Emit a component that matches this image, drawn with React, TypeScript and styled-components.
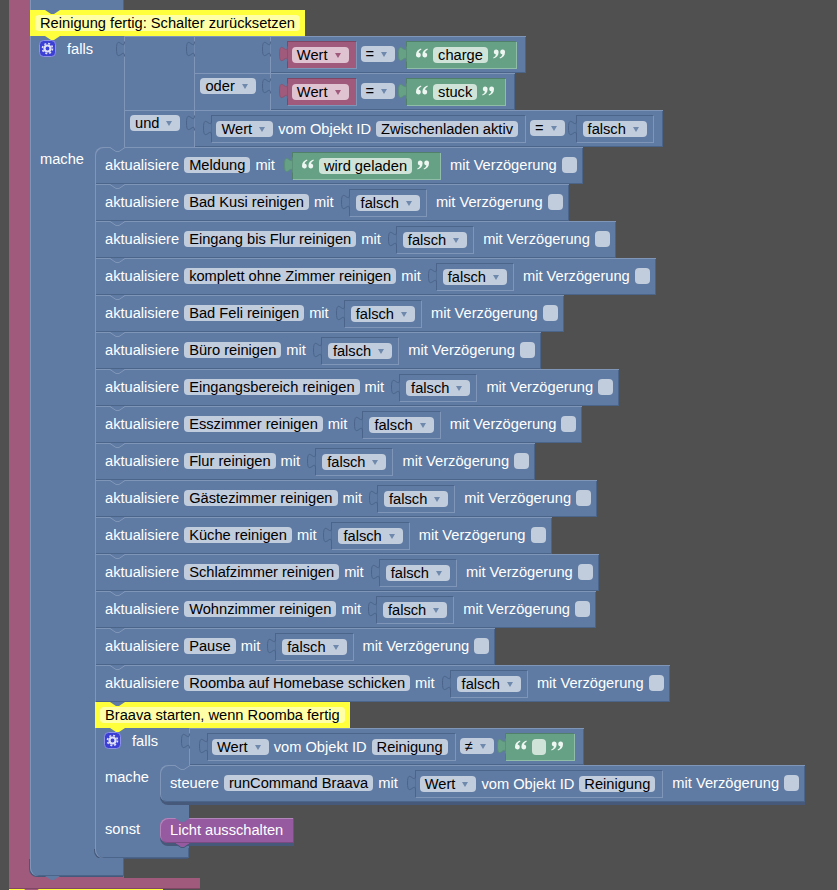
import React from 'react';
import styled, { createGlobalStyle } from 'styled-components';

const BLUE = '#5f7ba3';
const BLUE_LIGHT = '#8096b8';
const BLUE_DARK = '#4b6489';
const BLUE_SHADOW = '#46597a';
const PINK = '#a05a7c';
const PINK_DARK = '#7f4763';
const GREEN = '#66a085';
const GREEN_DARK = '#50806a';
const YELLOW = '#ffff3c';
const VIOLET = '#955a9f';

type Tone = 'blue' | 'pink' | 'green';

const fieldColors: Record<Tone, string> = {
  blue: '#c1ccdc',
  pink: '#e0c3d0',
  green: '#cfe3d9',
};

const arrowColors: Record<Tone, string> = {
  blue: '#6f89ad',
  pink: '#a05a7c',
  green: '#66a085',
};

const GlobalStyle = createGlobalStyle`
  html, body {
    margin: 0;
    background: #505050;
  }
`;

const Page = styled.div`
  box-sizing: border-box;
  height: 890px;
  width: 837px;
  padding-left: 9px;
  overflow: hidden;
  background: #505050;
  font-family: 'Liberation Sans', Arial, sans-serif;
  font-size: 14.67px;
  line-height: 16px;
  color: #fff;
`;

const LoopBlock = styled.div`
  position: relative;
`;

const LoopBody = styled.div`
  display: flex;
  align-items: stretch;
`;

const LoopRail = styled.div`
  width: 21px;
  flex: none;
  background: ${PINK};
`;

const LoopContent = styled.div`
  display: flex;
  flex-direction: column;
  align-items: flex-start;
`;

const LoopFoot = styled.div`
  position: relative;
  width: 191px;
  height: 11px;
  background: ${PINK};
  box-shadow: inset 0 -1px 0 ${PINK_DARK};
`;

const NextComment = styled.div`
  position: relative;
  width: 154px;
  height: 26px;
  background: ${YELLOW};
`;

const Stub = styled.div`
  width: 94px;
  height: 10px;
  background: ${BLUE};
  box-shadow: inset 1px 0 0 ${BLUE_LIGHT}, inset -1px 0 0 ${BLUE_DARK};
`;

const NotchSvg = styled.svg<{ $left: number; $below?: boolean }>`
  position: absolute;
  left: ${(p) => p.$left}px;
  top: ${(p) => (p.$below ? '100%' : '0')};
  width: 15px;
  height: 5px;
  overflow: visible;
  z-index: 3;
`;

// the little trapezoid that joins two stacked blocks
const Notch = ({
  fill,
  line = 'none',
  left = 15,
  below,
}: {
  fill: string;
  line?: string;
  left?: number;
  below?: boolean;
}) => (
  <NotchSvg $left={left} $below={below} viewBox="0 0 15 5">
    <path d="M0 0 L6 4 H9 L15 0 Z" fill={fill} />
    <path d="M0 0.5 L6 4.5 H9 L15 0.5" fill="none" stroke={line} />
  </NotchSvg>
);

const PuzzleSvg = styled.svg`
  position: absolute;
  left: -8px;
  top: 5px;
  width: 9px;
  height: 16px;
  overflow: visible;
  z-index: 2;
`;

// value connector on the left side of an input block
const Puzzle = ({ fill, line = BLUE_DARK }: { fill: string; line?: string }) => (
  <PuzzleSvg viewBox="0 0 9 16">
    <path d="M8.5 0.5 c0,10 -8,-8 -8,7.5 s8,-2.5 8,7.5 Z" fill={fill} stroke="none" />
    <path d="M8.5 0.5 c0,10 -8,-8 -8,7.5 s8,-2.5 8,7.5" fill="none" stroke={line} />
  </PuzzleSvg>
);

const Comment = styled.div`
  position: relative;
  padding: 5px;
  background: ${YELLOW};
  z-index: 2;
`;

const CommentText = styled.div`
  height: 16px;
  padding: 0 5px;
  border-radius: 4px;
  background: #ffffa8;
  color: #000;
  white-space: nowrap;
`;

const IfBlock = styled.div`
  position: relative;
`;

const IfHead = styled.div`
  display: flex;
  align-items: stretch;
`;

const FallsCell = styled.div`
  width: 94px;
  flex: none;
  display: flex;
  align-items: flex-start;
  gap: 11px;
  box-sizing: border-box;
  padding: 4px 0 0 9px;
  background: ${BLUE};
  box-shadow: inset 1px 0 0 ${BLUE_LIGHT};
`;

const FallsLabel = styled.span`
  margin-top: 1px;
`;

const GearBox = styled.svg`
  width: 17px;
  height: 17px;
  flex: none;
`;

const GearIcon = () => (
  <GearBox viewBox="0 0 17 17">
    <rect x="0.5" y="0.5" width="16" height="16" rx="4" fill="#3b3fd4" stroke="#8c90e6" />
    <circle cx="8.5" cy="8.5" r="3" fill="none" stroke="#dfe0f7" strokeWidth="2.2" />
    <circle cx="8.5" cy="8.5" r="5" fill="none" stroke="#dfe0f7" strokeWidth="1.6" strokeDasharray="2 1.93" />
  </GearBox>
);

const Branch = styled.div`
  display: flex;
  align-items: stretch;
`;

const BranchLabel = styled.div<{ $top: number }>`
  width: 65px;
  flex: none;
  box-sizing: border-box;
  padding: ${(p) => p.$top}px 0 0 10px;
  background: ${BLUE};
  box-shadow: inset 1px 0 0 ${BLUE_LIGHT};
`;

const BranchBody = styled.div<{ $top?: number; $bottom?: number }>`
  display: flex;
  flex-direction: column;
  align-items: flex-start;
  padding: ${(p) => p.$top ?? 0}px 0 ${(p) => p.$bottom ?? 0}px;
  background: linear-gradient(${BLUE}, ${BLUE}) left top / 29px 100% no-repeat;
`;

const FootBack = styled.div<{ $back?: string; $gap?: number }>`
  position: relative;
  width: 94px;
  padding-bottom: ${(p) => p.$gap ?? 0}px;
  background: ${(p) => p.$back ?? 'transparent'};
  z-index: 1;
`;

const Foot = styled.div<{ $height: number }>`
  position: relative;
  height: ${(p) => p.$height}px;
  background: ${BLUE};
  border-bottom-left-radius: 8px;
  box-shadow: inset 1px 0 0 ${BLUE_LIGHT}, inset -1px -1px 0 ${BLUE_DARK}, -1px 1px 0 ${BLUE_SHADOW};
`;

const Statement = styled.div<{ $corner?: 'top' | 'both' }>`
  position: relative;
  box-sizing: border-box;
  height: 37px;
  width: fit-content;
  display: flex;
  align-items: center;
  gap: 5px;
  padding: 0 6px 1px 10px;
  background: ${BLUE};
  white-space: nowrap;
  box-shadow: inset 1px 1px 0 ${BLUE_LIGHT}, inset -1px -1px 0 ${BLUE_DARK}
    ${(p) => (p.$corner === 'both' ? `, 0 3px 0 ${BLUE_SHADOW}` : '')};
  border-radius: ${(p) => (p.$corner === 'both' ? '8px 0 0 8px' : p.$corner === 'top' ? '8px 0 0 0' : '0')};
`;

const Field = styled.span<{ $tone?: Tone }>`
  display: inline-flex;
  align-items: center;
  flex: none;
  height: 16px;
  padding: 0 5px;
  border-radius: 4px;
  background: ${(p) => fieldColors[p.$tone ?? 'blue']};
  color: #000;
  white-space: nowrap;
`;

const DropdownField = styled(Field)`
  padding-right: 0;
`;

const Arrow = styled.i<{ $tone: Tone }>`
  width: 0;
  height: 0;
  margin: 1px 8px 0 7px;
  border-left: 3px solid transparent;
  border-right: 3px solid transparent;
  border-top: 5px solid ${(p) => arrowColors[p.$tone]};
`;

const Dropdown = ({ tone = 'blue', children }: { tone?: Tone; children: React.ReactNode }) => (
  <DropdownField $tone={tone}>
    {children}
    <Arrow $tone={tone} />
  </DropdownField>
);

const Checkbox = styled.span`
  width: 15px;
  height: 16px;
  border-radius: 4px;
  background: ${fieldColors.blue};
`;

const DelayLabel = styled.span`
  margin-left: 5px;
`;

const ValueBlock = styled.div<{ $color: string; $dark: string; $light: string; $gap: number; $pad: string }>`
  position: relative;
  flex: none;
  box-sizing: border-box;
  height: 27px;
  display: flex;
  align-items: center;
  gap: 5px;
  padding: ${(p) => p.$pad};
  margin-left: ${(p) => p.$gap}px;
  margin-top: 1px;
  background: ${(p) => p.$color};
  box-shadow: inset 1px 1px 0 ${(p) => p.$dark}, 1px 1px 0 ${(p) => p.$light};
`;

const QuoteSvg = styled.svg<{ $close?: boolean }>`
  width: 12px;
  height: 11px;
  flex: none;
  margin-top: -4px;
  transform: ${(p) => (p.$close ? 'rotate(180deg)' : 'none')};
`;

const Quote = ({ close }: { close?: boolean }) => (
  <QuoteSvg $close={close} viewBox="0 0 12 11">
    <path
      d="M5 0.5 C2 1.5 0 3.6 0 6.8 a2.4 2.4 0 1 0 2.6 -2.2 C2.8 3.4 3.8 2.4 5.4 1.5 Z M11.4 0.5 C8.4 1.5 6.4 3.6 6.4 6.8 a2.4 2.4 0 1 0 2.6 -2.2 C9.2 3.4 10.2 2.4 11.8 1.5 Z"
      fill="#eef6f2"
    />
  </QuoteSvg>
);

const TextValue = ({ text, gap = 6 }: { text: string; gap?: number }) => (
  <ValueBlock $color={GREEN} $dark={GREEN_DARK} $light="#8fbda8" $gap={gap} $pad="1px 11px 0 10px">
    <Puzzle fill={GREEN} line="#5c9079" />
    <Quote />
    <Field $tone="green">{text || '\u00a0'}</Field>
    <Quote close />
  </ValueBlock>
);

const FalseValue = ({ gap = 7 }: { gap?: number }) => (
  <ValueBlock $color={BLUE} $dark={BLUE_DARK} $light={BLUE_LIGHT} $gap={gap} $pad="1px 6px 0 7px">
    <Puzzle fill={BLUE} />
    <Dropdown>falsch</Dropdown>
  </ValueBlock>
);

const PinkValue = () => (
  <ValueBlock $color={PINK} $dark={PINK_DARK} $light={BLUE_LIGHT} $gap={0} $pad="1px 7px 0 5px">
    <Puzzle fill={PINK} line="#8f5170" />
    <Dropdown tone="pink">Wert</Dropdown>
  </ValueBlock>
);

const ObjectValue = ({ name, gap = 0 }: { name: string; gap?: number }) => (
  <ValueBlock $color={BLUE} $dark={BLUE_DARK} $light={BLUE_LIGHT} $gap={gap} $pad="1px 7px 0 5px">
    <Puzzle fill={BLUE} />
    <Dropdown>Wert</Dropdown>
    <span>vom Objekt ID</span>
    <Field>{name}</Field>
  </ValueBlock>
);

const Compare = styled.div`
  position: relative;
  box-sizing: border-box;
  height: 37px;
  width: fit-content;
  display: flex;
  align-items: center;
  gap: 5px;
  padding: 0 10px 1px 17px;
  background: ${BLUE};
  box-shadow: inset 1px 1px 0 ${BLUE_LIGHT}, inset -1px -1px 0 ${BLUE_DARK};
`;

const Logic = styled.div`
  position: relative;
  display: grid;
  grid-template-columns: auto auto;
  justify-content: start;
  justify-items: start;
`;

const LogicLabel = styled.div`
  align-self: stretch;
  justify-self: stretch;
  padding: 5px 14px 5px 6px;
  background: ${BLUE};
  box-shadow: inset 1px 1px 0 ${BLUE_LIGHT};
`;

const CallBlock = styled.div`
  position: relative;
  box-sizing: border-box;
  height: 25px;
  padding: 0 11px 1px 10px;
  display: flex;
  align-items: center;
  background: ${VIOLET};
  border-radius: 8px 0 0 8px;
  box-shadow: inset -1px -1px 0 #7a4a82, inset 1px 1px 0 #b285ba, 0 3px 0 ${BLUE_SHADOW};
`;

const UpdateRow = ({
  name,
  corner,
  children,
  verb = 'aktualisiere',
}: {
  name: string;
  corner?: 'top' | 'both';
  children: React.ReactNode;
  verb?: string;
}) => (
  <Statement $corner={corner}>
    <Notch fill={BLUE} line={BLUE_LIGHT} />
    <span>{verb}</span>
    <Field>{name}</Field>
    <span>mit</span>
    {children}
    <DelayLabel>mit Verzögerung</DelayLabel>
    <Checkbox />
  </Statement>
);

const switches = [
  'Bad Kusi reinigen',
  'Eingang bis Flur reinigen',
  'komplett ohne Zimmer reinigen',
  'Bad Feli reinigen',
  'Büro reinigen',
  'Eingangsbereich reinigen',
  'Esszimmer reinigen',
  'Flur reinigen',
  'Gästezimmer reinigen',
  'Küche reinigen',
  'Schlafzimmer reinigen',
  'Wohnzimmer reinigen',
  'Pause',
  'Roomba auf Homebase schicken',
];

const StateCompare = ({ text }: { text: string }) => (
  <Compare>
    <Puzzle fill={BLUE} />
    <PinkValue />
    <Dropdown>=</Dropdown>
    <TextValue text={text} />
  </Compare>
);

const Condition = () => (
  <Logic>
    <Puzzle fill={BLUE} />
    <LogicLabel />
    <Logic>
      <Puzzle fill={BLUE} />
      <LogicLabel />
      <StateCompare text="charge" />
      <LogicLabel>
        <Dropdown>oder</Dropdown>
      </LogicLabel>
      <StateCompare text="stuck" />
    </Logic>
    <LogicLabel>
      <Dropdown>und</Dropdown>
    </LogicLabel>
    <Compare>
      <Puzzle fill={BLUE} />
      <ObjectValue name="Zwischenladen aktiv" />
      <Dropdown>=</Dropdown>
      <FalseValue gap={6} />
    </Compare>
  </Logic>
);

const NestedIf = () => (
  <IfBlock>
    <Notch fill={YELLOW} />
    <IfHead>
      <FallsCell>
        <GearIcon />
        <FallsLabel>falls</FallsLabel>
      </FallsCell>
      <Compare>
        <Puzzle fill={BLUE} />
        <ObjectValue name="Reinigung" gap={1} />
        <Dropdown>≠</Dropdown>
        <TextValue text="" />
      </Compare>
    </IfHead>
    <Branch>
      <BranchLabel $top={4}>mache</BranchLabel>
      <BranchBody $bottom={5}>
        <UpdateRow verb="steuere" name="runCommand Braava" corner="both">
          <ObjectValue name="Reinigung" gap={12} />
        </UpdateRow>
      </BranchBody>
    </Branch>
    <Branch>
      <BranchLabel $top={14}>sonst</BranchLabel>
      <BranchBody $top={11} $bottom={5}>
        <CallBlock>
          <Notch fill={BLUE} />
          Licht ausschalten
          <Notch fill={VIOLET} line={BLUE_SHADOW} below />
        </CallBlock>
      </BranchBody>
    </Branch>
    <FootBack>
      <Foot $height={10}>
        <Notch fill={BLUE} line={BLUE_SHADOW} below />
      </Foot>
    </FootBack>
  </IfBlock>
);

export default function App() {
  return (
    <>
      <GlobalStyle />
      <Page>
        <LoopBlock>
          <LoopBody>
            <LoopRail />
            <LoopContent>
              <Stub />
              <Comment>
                <Notch fill={BLUE} />
                <CommentText>Reinigung fertig: Schalter zurücksetzen</CommentText>
                <Notch fill={YELLOW} below />
              </Comment>
              <IfBlock>
                <IfHead>
                  <FallsCell>
                    <GearIcon />
                    <FallsLabel>falls</FallsLabel>
                  </FallsCell>
                  <Condition />
                </IfHead>
                <Branch>
                  <BranchLabel $top={4}>mache</BranchLabel>
                  <BranchBody>
                    <UpdateRow name="Meldung" corner="top">
                      <TextValue text="wird geladen" gap={12} />
                    </UpdateRow>
                    {switches.map((name) => (
                      <UpdateRow key={name} name={name}>
                        <FalseValue gap={10} />
                      </UpdateRow>
                    ))}
                    <Comment>
                      <Notch fill={BLUE} />
                      <CommentText>Braava starten, wenn Roomba fertig</CommentText>
                    </Comment>
                    <NestedIf />
                  </BranchBody>
                </Branch>
                <FootBack $back={PINK} $gap={2}>
                  <Foot $height={18}>
                    <Notch fill={BLUE} below />
                  </Foot>
                </FootBack>
              </IfBlock>
            </LoopContent>
          </LoopBody>
          <LoopFoot>
            <Notch fill={PINK} below />
          </LoopFoot>
        </LoopBlock>
        <NextComment />
      </Page>
    </>
  );
}
